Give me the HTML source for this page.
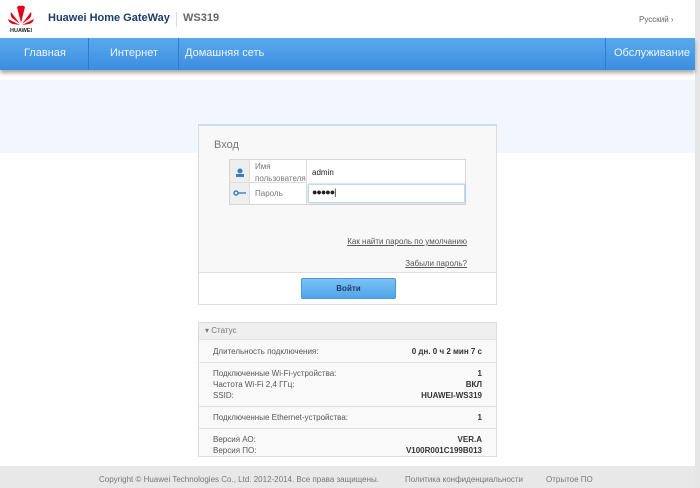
<!DOCTYPE html>
<html><head><meta charset="utf-8"><style>
*{margin:0;padding:0;box-sizing:border-box}
body{width:700px;height:488px;overflow:hidden;background:#fff;font-family:"Liberation Sans",sans-serif;position:relative;color:#333}
.a{position:absolute}
.nav{left:0;top:38px;width:695px;height:32px;background:linear-gradient(#5aa9ee,#3b8ee0);box-shadow:0 3px 4px rgba(0,0,0,.35)}
.nav span{position:absolute;top:9px;color:#eef6ff;font-size:11px}
.sep{position:absolute;top:0;width:1px;height:32px;background:#2f7ccb}
.box{border:1px solid #dcdcdc;background:#fff}
.row{position:absolute;left:14px;right:14px;font-size:8px;color:#555}
.row b{position:absolute;right:0;top:0;font-weight:bold;color:#333;text-align:right}
.hr{position:absolute;left:0;right:0;height:1px;background:#e2e2e2}
</style></head><body>
<div class="a" style="right:0;top:0;width:5px;height:488px;background:#e6e6e6"></div>
<svg class="a" style="left:6px;top:3px" width="30" height="30" viewBox="0 0 30 30">
<g fill="#e60012">
<path d="M15 20 L11 4 Q13 2 15 3 Z"/><path d="M15 20 L19 4 Q17 2 15 3 Z"/>
<path d="M14 21 L5 9 Q4 12 6 15 Z"/><path d="M16 21 L25 9 Q26 12 24 15 Z"/>
<path d="M14 22 L2 16 Q3 20 7 21 Z"/><path d="M16 22 L28 16 Q27 20 23 21 Z"/>
</g>
<text x="15" y="29" font-size="5.5" font-weight="bold" text-anchor="middle" fill="#222" font-family="Liberation Sans">HUAWEI</text>
</svg>
<div class="a" style="left:48px;top:12px;font-size:11px;font-weight:bold;color:#1e3d6b">Huawei Home GateWay</div>
<div class="a" style="left:176px;top:12px;width:1px;height:15px;background:#ddd"></div>
<div class="a" style="left:183px;top:12px;font-size:11px;font-weight:bold;color:#666">WS319</div>
<div class="a" style="left:639px;top:15px;font-size:8px;color:#666">Русский ›</div>
<div class="a nav">
<span style="left:24px">Главная</span><div class="sep" style="left:88px"></div>
<span style="left:110px">Интернет</span><div class="sep" style="left:178px"></div>
<span style="left:185px">Домашняя сеть</span><div class="sep" style="left:605px"></div>
<span style="left:614px">Обслуживание</span>
</div>
<div class="a" style="left:0;top:80px;width:695px;height:73px;background:#f1f7fd"></div>
<div class="a box" style="left:198px;top:124px;width:299px;height:181px;border-top:2px solid #c9dff0">
<div class="a" style="left:0;top:0;width:297px;height:146px;background:#f8f8f8"></div>
<div class="a" style="left:0;top:146px;width:297px;height:1px;background:#e0e0e0"></div>
<div class="a" style="left:15px;top:13px;font-size:11px;color:#777">Вход</div>
<div class="a" style="left:30px;top:33px;width:237px;height:46px;border:1px solid #d6d6d6;background:#fff">
<div class="a" style="left:0;top:0;width:20px;height:44px;background:#eee;border-right:1px solid #ddd"></div>
<div class="a" style="left:0;top:22px;width:76px;height:1px;background:#ddd"></div>
<div class="a" style="left:76px;top:0;width:1px;height:44px;background:#ddd"></div>
<svg class="a" style="left:5px;top:8px" width="10" height="10"><circle cx="5" cy="3" r="2.5" fill="#3a7cc6"/><rect x="1" y="6" width="8" height="3" fill="#3a7cc6"/></svg>
<svg class="a" style="left:3px;top:30px" width="14" height="6"><circle cx="3" cy="3" r="2" fill="none" stroke="#3a7cc6" stroke-width="1.4"/><rect x="5" y="2.3" width="8" height="1.4" fill="#3a7cc6"/></svg>
<div class="a" style="left:25px;top:1px;font-size:8px;color:#777;line-height:12px">Имя<br>пользователя</div>
<div class="a" style="left:25px;top:29px;font-size:8px;color:#777">Пароль</div>
<div class="a" style="left:82px;top:8px;font-size:8px;color:#222">admin</div>
<div class="a" style="left:78px;top:24px;width:157px;height:19px;border:1px solid #c8d8e8;box-shadow:0 0 2px #9bc"></div>
<div class="a" style="left:82px;top:27px;font-size:9px;color:#222;letter-spacing:-1px">●●●●●|</div>
</div>
<div class="a" style="right:29px;top:111px;font-size:8px;color:#555;text-decoration:underline">Как найти пароль по умолчанию</div>
<div class="a" style="right:29px;top:133px;font-size:8px;color:#555;text-decoration:underline">Забыли пароль?</div>
<div class="a" style="left:102px;top:152px;width:95px;height:21px;border-radius:2px;background:linear-gradient(#7cc2f4,#4fa5ea);border:1px solid #4a98d8;font-size:8px;font-weight:bold;color:#1d3c66;text-align:center;line-height:19px">Войти</div>
</div>
<div class="a box" style="left:198px;top:322px;width:299px;height:135px;background:#f9f9f9">
<div class="a" style="left:0;top:0;width:297px;height:16px;background:#efefef"></div>
<div class="a" style="left:6px;top:3px;font-size:8px;color:#777">▾ Статус</div>
<div class="hr" style="top:16px"></div>
<div class="row" style="top:24px">Длительность подключения:<b>0 дн. 0 ч 2 мин 7 с</b></div>
<div class="hr" style="top:39px"></div>
<div class="row" style="top:45px;line-height:11px">Подключенные Wi-Fi-устройства:<br>Частота Wi-Fi 2,4 ГГц:<br>SSID:<b>1<br>ВКЛ<br>HUAWEI-WS319</b></div>
<div class="hr" style="top:83px"></div>
<div class="row" style="top:90px">Подключенные Ethernet-устройства:<b>1</b></div>
<div class="hr" style="top:105px"></div>
<div class="row" style="top:111px;line-height:11px">Версия АО:<br>Версия ПО:<b>VER.A<br>V100R001C199B013</b></div>
</div>
<div class="a" style="left:0;top:466px;width:695px;height:22px;background:#e8e8e8"></div>
<div class="a" style="left:99px;top:475px;font-size:8px;color:#777">Copyright © Huawei Technologies Co., Ltd. 2012-2014. Все права защищены.</div>
<div class="a" style="left:405px;top:475px;font-size:8px;color:#777">Политика конфиденциальности</div>
<div class="a" style="left:546px;top:475px;font-size:8px;color:#777">Отрытое ПО</div>
</body></html>
